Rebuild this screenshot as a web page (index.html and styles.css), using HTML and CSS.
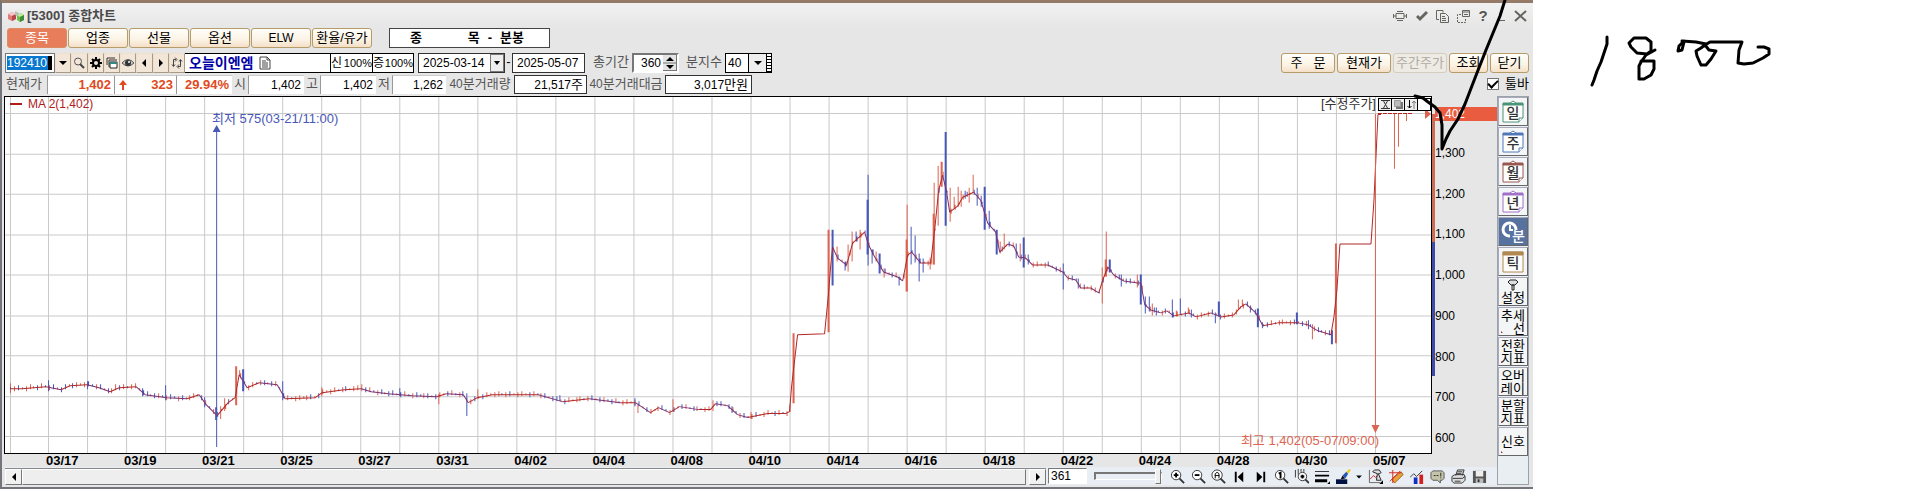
FILE: index.html
```html
<!DOCTYPE html>
<html lang="ko">
<head>
<meta charset="utf-8">
<title>[5300] 종합차트</title>
<link rel="stylesheet" href="styles.css">
</head>
<body>
<main class="desk">
<section class="app">
  <header class="titlebar">
    <svg class="logo" width="18" height="14" viewBox="0 0 18 14"><path d="M1 5l4-2 4 2v5l-4 2-4-2z" fill="#e07b78"/><path d="M1 5l4-2 4 2-4 2z" fill="#f8c9c4"/><path d="M5 7l4-2v5l-4 2z" fill="#b8484c"/><path d="M8 2l3-2 4 2-3 2z" fill="#e8ece4"/><path d="M8 2l4 2v4l-4-2z" fill="#b5bfc0"/><path d="M10 6l4-2 3 2v5l-4 2-3-2z" fill="#6fc04a"/><path d="M10 6l4-2 3 2-4 2z" fill="#c5e9a4"/><path d="M13 8l4-2v5l-4 2z" fill="#3f8d3a"/></svg>
    <h1 class="title">[5300] 종합차트</h1>
    <div class="win-tools">
      <button class="plain" aria-label="고정"><svg width="16" height="14" viewBox="0 0 16 14"><path d="M4 4.500h8v5H4zM4 7H1M15 7h-3M1.500 5v4M14.500 5v4M5 2.500h6M5 11.500h6" class="line"/></svg></button>
      <button class="plain" aria-label="확인"><svg width="12" height="14" viewBox="0 0 12 14"><path d="M1 7l3 3 7-7" class="line thick"/></svg></button>
      <button class="plain" aria-label="복사"><svg width="13" height="14" viewBox="0 0 13 14"><path d="M3 10.500H.5v-9H7v2M4.500 4.500h5l3 3v6h-8zM6 7.500h3M6 9.500h4M6 11.500h4" class="line"/></svg></button>
      <button class="plain" aria-label="분리"><svg width="13" height="14" viewBox="0 0 13 14"><path d="M5.500 1.500h7v6h-7zM5 3h7M7 5.500h4" class="line"/><path d="M4 5.500H.5v8h8V9" class="line" stroke-dasharray="2 1"/></svg></button>
      <button class="plain help" aria-label="도움말">?</button>
      <button class="plain" aria-label="최소화"><svg width="10" height="14" viewBox="0 0 10 14"><path d="M1 11.500h8" class="line"/></svg></button>
      <button class="plain" aria-label="닫기"><svg width="13" height="14" viewBox="0 0 13 14"><path d="M1 2l11 10M12 2L1 12" class="line mid"/></svg></button>
    </div>
  </header>

  <nav class="tabs">
    <button class="tab active">종목</button><button class="tab">업종</button><button class="tab">선물</button><button class="tab">옵션</button><button class="tab latin">ELW</button><button class="tab">환율/유가</button>
    <div class="mode"><span class="grow">종</span><span>목</span><span>-</span><span>분봉</span></div>
  </nav>

  <div class="row query">
    <input class="code" aria-label="종목코드" value="192410">
    <div class="iconset">
      <button class="sq" aria-label="목록"><svg width="12" height="12" viewBox="0 0 12 12"><path d="M2 4h8L6 8z"/></svg></button>
      <button class="sq" aria-label="검색"><svg width="12" height="12" viewBox="0 0 12 12"><circle cx="5" cy="4.500" r="3.500" fill="none" stroke="#555"/><path d="M7 7l4 4" stroke="#444" stroke-width="2"/></svg></button>
      <button class="sq" aria-label="설정"><svg width="12" height="12" viewBox="0 0 12 12"><circle cx="6" cy="6" r="3" fill="none" stroke="#000" stroke-width="2"/><path d="M6 0v3M6 9v3M0 6h3M9 6h3M2 2l2 2M8 8l2 2M10 2L8 4M4 8l-2 2" stroke="#000" stroke-width="2"/></svg></button>
      <button class="sq" aria-label="창"><svg width="12" height="12" viewBox="0 0 12 12"><path d="M1 8V1h8M3 3h8M3 10V3" fill="none" stroke="#333"/><path d="M4 5h7v6H4z" fill="#fff" stroke="#222"/><path d="M4 5h7v2H4z" fill="#388"/></svg></button>
      <button class="sq" aria-label="보기"><svg width="14" height="12" viewBox="0 0 14 12"><path d="M1 6q6-7 12 0q-6 6-12 0z" fill="#ccc" stroke="#555"/><circle cx="7" cy="6" r="3" fill="#333"/><circle cx="8" cy="5" r="1" fill="#fff"/></svg></button>
      <button class="sq" aria-label="이전"><svg width="12" height="12" viewBox="0 0 12 12"><path d="M8 2v8L4 6z"/></svg></button>
      <button class="sq" aria-label="다음"><svg width="12" height="12" viewBox="0 0 12 12"><path d="M4 2v8l4-4z"/></svg></button>
      <button class="sq" aria-label="갱신"><svg width="12" height="12" viewBox="0 0 12 12"><path d="M5 2.500H2.500V9M7 9.500h2.500V3M4 .5l2 2-2 2M8 7.500l-2 2 2 2M1 7.500l1.500 2 1.500-2M8 4.500l1.500-2 1.500 2" fill="none" stroke="#444"/></svg></button>
    </div>
    <div class="name"><b>오늘이엔엠</b><svg width="12" height="14" viewBox="0 0 12 14"><path d="M1 1h7l3 3v9H1zM8 1v3h3M3 5h4M3 7h6M3 9h6M3 11h6" fill="#fff" stroke="#444"/></svg></div>
    <div class="rate"><span>신</span><span class="pct">100%</span></div><div class="rate"><span>증</span><span class="pct">100%</span></div>
    <div class="date from"><input class="n" aria-label="시작일" value="2025-03-14"><button class="drop" aria-label="달력"><svg width="8" height="6" viewBox="0 0 8 6"><path d="M1 1h6L4 5z"/></svg></button></div>
    <span class="dash">-</span>
    <div class="date"><input class="n" aria-label="종료일" value="2025-05-07"></div>
    <label class="lbl period" for="period">총기간</label>
    <div class="spin"><input class="n" id="period" value="360"><svg width="14" height="16" viewBox="0 0 14 16"><path d="M0 0h14v16H0z" fill="#e4e4e4"/><path d="M0 8h14M0 15.500h14M13.500 0v16" stroke="#777"/><path d="M7 2l4 4H3zM7 14l4-4H3z"/></svg></div>
    <label class="lbl minute" for="minute">분지수</label>
    <div class="combo"><select class="n" id="minute"><option>40</option></select><span class="combo-btn"><svg width="10" height="8" viewBox="0 0 10 8"><path d="M1 2h8L5 6z"/></svg></span><i class="grip"></i></div>
    <div class="actions"><button class="act w54">주&nbsp;&nbsp; 문</button><button class="act w54">현재가</button><button class="act w54" disabled>주간주가</button><button class="act w40">조회</button><button class="act w40">닫기</button></div>
  </div>

  <div class="row quote">
    <span class="lbl first">현재가</span>
    <output class="cell c67 up">1,402</output><output class="cell c61 up arrow"><svg width="10" height="12" viewBox="0 0 10 12"><path d="M5 1l4 5H6v5H4V6H1z" fill="#e04a20"/></svg>323</output><output class="cell c55 up">29.94%</output>
    <span class="lbl one">시</span><output class="cell c55">1,402</output>
    <span class="lbl one">고</span><output class="cell c55">1,402</output>
    <span class="lbl one">저</span><output class="cell c55 last">1,262</output>
    <span class="lbl vol"><i class="n">40</i>분거래량</span><output class="cell boxed c73">21,517<span class="k">주</span></output>
    <span class="lbl amt"><i class="n">40</i>분거래대금</span><output class="cell boxed c87">3,017<span class="k">만원</span></output>
    <label class="toggle"><input type="checkbox" checked>툴바</label>
  </div>

  <div class="body">
    <div class="main">
      <div class="plot-row">
        <div class="plot">
          <svg id="chart" class="chart" viewBox="5 97 1425 357" preserveAspectRatio="none"></svg>
          <span class="legend"><i></i>MA 2(1,402)</span>
          <span class="note low">최저 575(03-21/11:00)</span>
          <span class="note high">최고 1,402(05-07/09:00)</span>
          <div class="adjust"><span>[수정주가]</span>
            <button aria-label="축소"><svg width="11" height="11" viewBox="0 0 11 11"><path d="M1 1.500h9M1 9.500h9M3 1l5 9M8 1L3 10" stroke="#333" fill="none"/></svg></button><button aria-label="배경"><svg width="11" height="11" viewBox="0 0 11 11"><path d="M3 3h7v7H3z" fill="#777"/><path d="M1.500 1.500h6v6h-6z" fill="#bbb" stroke="#999"/></svg></button><button aria-label="반전"><svg width="11" height="11" viewBox="0 0 11 11"><path d="M3.500 1v8M1.500 7l2 2 2-2" fill="none" stroke="#000"/><path d="M8 10V2M6 4l2-2 2 2" fill="none" stroke="#777"/></svg></button><button aria-label="빈칸"></button>
          </div>
        </div>
        <div class="range"></div>
        <div class="axis"><span class="now">1,402</span>
          <div class="ticks"><span>1,300</span><span>1,200</span><span>1,100</span><span>1,000</span><span>900</span><span>800</span><span>700</span><span>600</span></div>
        </div>
      </div>
      <div class="days"><span>03/17</span><span>03/19</span><span>03/21</span><span>03/25</span><span>03/27</span><span>03/31</span><span>04/02</span><span>04/04</span><span>04/08</span><span>04/10</span><span>04/14</span><span>04/16</span><span>04/18</span><span>04/22</span><span>04/24</span><span>04/28</span><span>04/30</span><span>05/07</span></div>
      <div class="bottom">
        <div class="scroll"><button aria-label="왼쪽"><svg width="6" height="8" viewBox="0 0 6 8"><path d="M5 0v8L1 4z"/></svg></button><div class="track"></div><button aria-label="오른쪽"><svg width="6" height="8" viewBox="0 0 6 8"><path d="M1 0v8l4-4z"/></svg></button></div>
        <input class="count" aria-label="봉 개수" value="361">
        <input class="slider" type="range" aria-label="확대" value="100">
        <div class="tools">
          <button class="plain" aria-label="확대"><svg viewBox="0 0 16 16"><circle cx="6.500" cy="6.500" r="5" class="lens"/><path d="M10 10l5 5" class="handle"/><path d="M4 6.500h5M6.500 4v5" class="bold"/></svg></button>
          <button class="plain" aria-label="축소"><svg viewBox="0 0 16 16"><circle cx="6.500" cy="6.500" r="5" class="lens"/><path d="M10 10l5 5" class="handle"/><path d="M4 6.500h5" class="bold"/></svg></button>
          <button class="plain" aria-label="전체"><svg viewBox="0 0 16 16"><circle cx="6.500" cy="6.500" r="5.500" class="lens"/><path d="M10 10l5 5" class="handle"/><path d="M4.500 10V5l2-1.500 2 1.500v5M4 7h5" class="bold fine"/></svg></button>
          <button class="plain" aria-label="처음"><svg viewBox="0 0 16 16"><path d="M3 3h2v11H3zM12 3v11L6 8.500z"/></svg></button>
          <button class="plain" aria-label="끝"><svg viewBox="0 0 16 16"><path d="M11 3h2v11h-2zM4 3v11l6-5.500z"/></svg></button>
          <button class="plain" aria-label="원래대로"><svg viewBox="0 0 16 16"><circle cx="6.500" cy="6.500" r="5" class="lens"/><path d="M10 10l5 5" class="handle"/><path d="M5 5l2-1v6" class="bold"/></svg></button>
          <button class="plain" aria-label="구간 확대"><svg viewBox="0 0 16 16"><path d="M1.500 1v8M4.500 0v6M7.500 0v3M10.500 0v3" stroke="#333"/><circle cx="9" cy="8" r="4.500" class="lens"/><path d="M12 11l4 4" class="handle"/><path d="M7 8h4M9 6v4" class="bold"/></svg></button>
          <button class="plain" aria-label="선 굵기"><svg viewBox="0 0 16 16"><path d="M0 2h15v1H0zM0 6h15v2H0zM0 11h13v3H0zM13 16h3v-3z"/></svg></button>
          <button class="plain" aria-label="선 색"><svg viewBox="0 0 16 16"><path d="M0 11h12v5H0z" fill="#001040"/><path d="M5 11l2-4 3 3z" fill="#111"/><path d="M7 7l4-4 2 2-3 5z" fill="#2458b8"/><path d="M11 3l3-3 2 1-3 4z" fill="#e8cf20"/></svg></button>
          <button class="plain tiny" aria-label="색 목록"><svg viewBox="0 0 6 16"><path d="M0 7h6L3 10z"/></svg></button>
          <button class="plain" aria-label="차트 도구"><svg viewBox="0 0 16 16"><path d="M1.500 1v13.500H13" class="line"/><path d="M2 11l4-4 2 2 4-4" stroke="#d02020" fill="none"/><path d="M5 3l2-2h5l2 3-2 1h-1l3 7H9l1-7z" fill="#ddd" stroke="#222"/><path d="M12 16h4v-4z"/></svg></button>
          <button class="plain" aria-label="작도"><svg viewBox="0 0 16 16"><path d="M3 11L13 3l2 3L6 15z" fill="#e8a23c" stroke="#a0601c"/><path d="M0 4h13M4 1v14M1 13L12 2" stroke="#d8281c" fill="none"/></svg></button>
          <button class="plain" aria-label="지표"><svg viewBox="0 0 16 16"><path d="M4 9h4v7H4z" fill="#1030c0"/><path d="M10 6h4v10h-4z" fill="#d02020"/><path d="M0 9l4-4 3 3 6-6" stroke="#333" fill="none"/></svg></button>
          <button class="plain" aria-label="메모"><svg viewBox="0 0 16 16"><path d="M3 2h10l2 2v6l-2 2h-2v3l-3-3H3l-2-2V4z" fill="#c5c4aa" stroke="#555"/><path d="M4 7h2M7 7h2M11.500 4v4M11.500 9v1" stroke="#222"/></svg></button>
          <button class="plain" aria-label="인쇄"><svg viewBox="0 0 16 16"><path d="M5 7l2-6h7l-2 6M1 8l3-2h10l1 2v4l-3 3H3l-2-2z" fill="#ddd" stroke="#333"/><path d="M2 10h10l3-2M7 3h5M6 5h5M4 13h6" stroke="#333" fill="none"/></svg></button>
          <button class="plain" aria-label="저장"><svg viewBox="0 0 16 16"><path d="M1 2h14v13H1z" fill="#555"/><path d="M4 2h8v6H4z" fill="#eee"/><path d="M4 10h8v5H4z" fill="#bbb"/><path d="M6 11h2v3H6z" fill="#333"/></svg></button>
        </div>
      </div>
    </div>
    <aside class="side">
      <button class="cal" aria-label="일봉"><svg viewBox="0 0 24 24" class="green"><path d="M2 4h20v14l-4 4H2z"/><path d="M2 3h20v2H2z" class="top"/><path d="M9 3l3-2 3 2M18 22v-4h4"/></svg><b>일</b></button>
      <button class="cal" aria-label="주봉"><svg viewBox="0 0 24 24" class="blue"><path d="M2 4h20v14l-4 4H2z"/><path d="M2 3h20v2H2z" class="top"/><path d="M9 3l3-2 3 2M18 22v-4h4"/></svg><b>주</b></button>
      <button class="cal" aria-label="월봉"><svg viewBox="0 0 24 24" class="brown"><path d="M2 4h20v14l-4 4H2z"/><path d="M2 3h20v2H2z" class="top"/><path d="M9 3l3-2 3 2M18 22v-4h4"/></svg><b>월</b></button>
      <button class="cal" aria-label="년봉"><svg viewBox="0 0 24 24" class="violet"><path d="M2 4h20v14l-4 4H2z"/><path d="M2 3h20v2H2z" class="top"/><path d="M9 3l3-2 3 2M18 22v-4h4"/></svg><b>년</b></button>
      <button class="cal on" aria-label="분봉"><svg viewBox="0 0 24 24"><path d="M9 16A6.500 6.500 0 1 1 15 10" stroke-width="3"/><path d="M9 5v5h3" stroke-width="2"/></svg><b>분</b></button>
      <button class="cal" aria-label="틱"><svg viewBox="0 0 24 24" class="amber"><path d="M2 2h20v20H2z"/><path d="M2 2h20v3H2z" class="top"/></svg><b>틱</b></button>
      <button class="txt"><svg width="12" height="12" viewBox="0 0 12 12"><path d="M1 3l2-2h6l2 2-3 3H4zM5 6h2v5H5z" fill="#ddd" stroke="#222"/></svg><span>설정</span></button>
      <button class="txt more"><span>추세</span><span class="end">선</span></button>
      <button class="txt more"><span>전환</span><span>지표</span></button>
      <button class="txt more"><span>오버</span><span>레이</span></button>
      <button class="txt more"><span>분할</span><span>지표</span></button>
      <button class="txt more"><span>신호</span></button>
    </aside>
  </div>
</section>
<section class="blank"></section>
<svg class="ink" viewBox="0 0 1912 489" preserveAspectRatio="none">
  <path d="M1505 0L1500 16L1486 50L1475 78L1465 104L1458 119L1450 131L1446 139L1442 149L1442 125L1440 113L1435 107L1428 102L1423 98L1415 96"/>
  <path d="M1607 37v7l-6 18-4 9-3 9-2 5"/>
  <path d="M1646 38h-12l-5 5 2 4 6 6 10 1 4-3v-9l-5-4M1655 50l-9 5-5 7-2 4v13h5l7-4 3-6v-8h-13"/>
  <path d="M1684 41l-5 5-1 5 4-1 2-8M1682 41l14 1 10 2-5 4-5 3 1 5 4 9h5l5-6 5-8-7-1-4-5 5-3h32l-3 8-1 13 6 1 9-1 10-5 6-4v-5l-5-2h-6"/>
</svg>
</main>
<script src="chart.js"></script>
</body>
</html>
```
FILE: styles.css
```css
* { box-sizing: border-box; }
body { margin: 0; background: #fff; color: #000; font: 12px/14px "Liberation Sans", "Noto Sans CJK KR", sans-serif; }
button, input, select { font: inherit; color: inherit; margin: 0; padding: 0; border: 0; border-radius: 0; }
button { display: flex; align-items: center; justify-content: center; background: none; }
svg { display: block; flex: none; }
i { font-style: normal; }
.n { font-size: 12px; }
.k { font-size: 13px; }
.desk { position: relative; display: grid; grid-template-columns: minmax(0, 1533fr) minmax(0, 379fr); min-height: 100vh; }
.app { min-width: 0; display: flex; flex-direction: column; background: linear-gradient(#f1f1f1, #e6e6e6 26px); border: solid #74757a; border-width: 3px 0 2px 2px; border-top-color: #967a68; padding: 0 4px 2px 3px; }
.ink { position: absolute; inset: 0; width: 100%; height: 100%; fill: none; stroke: #000; stroke-width: 3; stroke-linejoin: round; stroke-linecap: round; pointer-events: none; }

.titlebar { display: flex; align-items: center; height: 25px; padding: 0 2px; gap: 2px; }
.title { flex: 1; margin: 0; font-size: 13px; font-weight: 700; color: #4a4a4a; line-height: 18px; }
.win-tools { display: flex; align-items: center; gap: 8px; color: #55534f; }
.line { fill: none; stroke: #66645f; }
.thick { stroke-width: 3; }
.mid { stroke-width: 2; }
.help { font-size: 15px; font-weight: 700; width: 10px; }

.tabs { display: flex; gap: 1px; height: 20px; padding-left: 2px; font-size: 13px; }
.tab, .act { border: 1px solid #b59c68; border-radius: 3px; background: linear-gradient(#fffefa, #fbf3e4 60%, #f5dfc8); white-space: nowrap; font-size: 13px; }
.tab { width: 60px; }
.tab.latin { font-size: 12px; }
.tab.active { background: #e87d5c; border-color: #dd8d60; color: #fff; }
.mode { width: 161px; margin-left: 16px; padding: 0 25px 0 20px; display: flex; gap: 8px; align-items: center; border: 1px solid #444; background: #fff; font-weight: 700; }
.grow { flex: 1; }

.row { display: flex; align-items: center; font-size: 13px; white-space: nowrap; }
.query { height: 20px; margin-top: 5px; align-items: stretch; }
.code { width: 50px; padding-left: 1px; font-size: 12px; border: 1px solid #777; color: #fff; background: linear-gradient(#0878d0, #0878d0) 1px 2px / 41px 14px no-repeat, linear-gradient(#000, #000) 42px 2px / 4px 14px no-repeat, #fff; }
.iconset { display: grid; grid-template-columns: repeat(8, 1fr); width: 130px; }
.sq { border: 1px solid; border-color: #eee0cc #a99a86 #a99a86 #eee0cc; background: #f2e6d8; }
.name { width: 145px; padding-left: 4px; display: flex; align-items: center; gap: 6px; background: #fff; border: solid #000; border-width: 1px 0; color: #0000a8; font-size: 14px; }
.rate { width: 42px; display: flex; justify-content: space-between; font-size: 12px; background: #fff; border: 1px solid #000; border-right: 0; line-height: 18px; }
.rate + .rate { border-right: 1px solid #000; }
.pct { font-size: 11px; }
.date { width: 73px; display: flex; border: 1px solid #333; background: #fff; }
.date.from { width: 87px; margin-left: 4px; }
.date input { flex: 1; min-width: 0; padding-left: 4px; background: none; }
.drop { width: 14px; border: 1px solid #777; background: #eee; }
.dash { width: 7px; text-align: center; line-height: 18px; }
.lbl { color: #555; line-height: 18px; }
.period { margin: 0 3px 0 8px; width: 36px; }
.spin { width: 47px; display: flex; align-items: center; border: 2px solid; border-color: #777 #fff #fff #777; background: #fff; }
.spin input { flex: 1; min-width: 0; text-align: right; padding-right: 2px; background: none; }
.minute { margin: 0 3px 0 7px; width: 36px; }
.combo { width: 47px; display: flex; border: 1px solid #000; background: #fff; }
.combo select { appearance: none; flex: 1; min-width: 0; padding-left: 2px; background: #fff; }
.combo-btn { width: 18px; display: grid; place-items: center; background: #eee; border-left: 1px solid #000; }
.grip { width: 5px; border-left: 1px solid #000; background: repeating-linear-gradient(#fff 0 2px, #000 2px 3px); }
.actions { margin-left: auto; display: flex; gap: 2px; }
.w54 { width: 54px; } .w40 { width: 39px; }
.act:disabled { color: #b0aca4; border-color: #d4cdbd; background: #eeeae4; }

.quote { height: 20px; margin-top: 1px; margin-bottom: 2px; }
.quote .first { width: 42px; padding-left: 1px; }
.cell { height: 19px; padding: 0 3px; text-align: right; line-height: 18px; font-size: 12px; background: #fff; border-left: 1px solid #999; border-top: 1px solid #ccc; }
.cell.up { color: #e04a20; font-weight: 700; font-size: 13px; }
.cell.arrow { display: flex; align-items: center; justify-content: space-between; }
.boxed { border: 1px solid #333; }
.c55 { width: 56px; } .c61 { width: 62px; } .c67 { width: 67px; } .c73 { width: 73px; } .c87 { width: 87px; }
.last { width: 54px; }
.one { width: 16px; text-align: center; }
.vol { width: 68px; text-align: center; } .amt { width: 78px; text-align: center; }
.toggle { margin-left: auto; display: flex; align-items: center; gap: 6px; }
.toggle input { appearance: none; width: 12px; height: 12px; border: 1px solid #777; background: #fff; display: grid; place-items: center; }
.toggle input::after { content: ""; width: 8px; height: 4px; border: solid #000; border-width: 0 0 2px 2px; rotate: -45deg; translate: 0 -1px; }

.body { flex: 1; display: flex; min-height: 389px; }
.main { flex: 1; min-width: 0; display: flex; flex-direction: column; }
.plot-row { flex: 1; display: flex; min-height: 0; }
.plot { position: relative; flex: 1; min-width: 0; border: solid #000; border-width: 1px 1px 1px 0; box-shadow: -1px 0 #000; background: #fff; }
.chart { position: absolute; inset: 0; width: 100%; height: 100%; }
.grid { stroke: #c9c9c9; fill: none; }
.up-bar { stroke: #dc6450; fill: none; }
.down-bar { stroke: #4858b8; fill: none; }
.wide { stroke-width: 2; }
.ma { stroke: #b02828; fill: none; }
.ma-cool { stroke: #7c3070; fill: none; }
.red { fill: #dc6450; } .navy { fill: #4858b8; }
.legend { position: absolute; left: 5px; top: 0; display: flex; align-items: center; gap: 6px; color: #b01c1c; }
.legend i { width: 12px; height: 2px; background: #b01c1c; }
.note { position: absolute; white-space: nowrap; font-size: 13px; }
.low { left: 207px; top: 15px; color: #4858b8; }
.high { right: 52px; bottom: 5px; color: #dc6450; }
.adjust { position: absolute; right: 0; top: 0; display: flex; align-items: center; color: #333; font-size: 13px; line-height: 14px; }
.adjust button { width: 14px; height: 13px; border: 1px solid #000; background: #eee; margin-left: -1px; }
.adjust button:last-child { background: #fff; }
.adjust span { margin-right: 3px; }
.range { width: 3px; margin: 18px 0 78px; background: linear-gradient(#cc6a58 49%, #3c4ca8 49%); }
.axis { width: 62px; display: flex; flex-direction: column; }
.now { height: 14px; margin-top: 11px; background: #ea5c40; color: #fff; }
.ticks { flex: 1; margin: 25px 0 9px; display: flex; flex-direction: column; justify-content: space-between; }
.days { display: grid; grid-template-columns: repeat(18, 1fr); height: 13px; line-height: 13px; padding: 0 46px 0 41px; font-size: 13px; font-weight: 700; }
.bottom { display: flex; align-items: center; height: 18px; background: #e9eef5; }
.scroll { flex: 1; display: flex; height: 17px; border-top: 1px solid #888; background: #eee; }
.scroll button { width: 17px; border: 1px solid; border-color: #fff #777 #777 #fff; background: #f1f1f1; }
.track { flex: 1; margin-right: 3px; border: 1px solid; border-color: #fff #777 #777 #fff; }
.count { width: 39px; height: 16px; margin-left: 2px; padding-left: 2px; border: 1px solid; border-color: #777 #fff #fff #777; background: #fff; }
.slider { appearance: none; width: 68px; height: 16px; margin: 0 8px 0 7px; background: none; }
.slider::-webkit-slider-runnable-track { height: 8px; border: 1px solid; border-width: 2px 1px 1px 2px; border-color: #777 #fff #fff #777; }
.slider::-webkit-slider-thumb { appearance: none; width: 6px; height: 15px; margin-top: -5px; border: 1px solid; border-color: #fff #777 #777 #fff; background: #eee; }
.tools { width: 327px; display: flex; justify-content: space-between; align-items: center; padding-right: 10px; }
.tools svg { width: 15px; height: 15px; }
.tools .tiny svg { width: 6px; }
.lens { fill: #fff; stroke: #333; }
.handle { stroke: #333; stroke-width: 2; }
.bold { fill: none; stroke: #000; stroke-width: 2; }
.fine { stroke-width: 1; }
.side { width: 32px; border: 1px solid #9aa2ac; background: #e9eef2; display: flex; flex-direction: column; gap: 1px; }
.side button { height: 29px; border: 1px solid; border-color: #aab #666 #666 #aab; background: #f4f5f6; }
.side .cal { display: grid; grid-template: 100% / 100%; place-items: center; }
.cal svg { grid-area: 1 / 1; width: 24px; height: 24px; fill: #fff; stroke: currentColor; }
.cal b { grid-area: 1 / 1; padding-top: 3px; font-size: 14px; line-height: 16px; color: #333; font-weight: 500; }
.cal .top { fill: currentColor; }
.green { color: #4a9478; } .blue { color: #5078b8; } .brown { color: #985850; } .violet { color: #a070c8; } .amber { color: #b08850; }
.side .on { background: #5872a0; color: #fff; }
.cal.on svg { fill: none; }
.on b { color: #fff; padding: 8px 0 0 11px; }
.side .txt { position: relative; flex-direction: column; font-size: 13px; line-height: 13px; }
.end { padding-left: 12px; }
.more::before { content: ""; position: absolute; left: 2px; bottom: 2px; border: 1px solid; border-color: transparent transparent #a03030 #a03030; }
```
FILE: chart.js
```js
// Moving-average vertices: x, y in plot units.
const line = [
  10,389, 22,389, 46,387, 61,390, 70,386, 87,385, 99,388, 110,392, 119,388, 136,387, 145,395, 167,398, 187,399,
  199,395, 206,405, 217,416, 228,403, 235,398, 239,375, 247,388, 259,383, 277,385, 285,399, 315,398, 322,393,
  344,390, 361,389, 371,392, 388,394, 412,396, 436,397, 446,394, 463,395, 468,403, 477,398, 492,395, 538,395,
  562,402, 589,399, 620,403, 635,403, 650,413, 658,408, 669,413, 679,407, 698,410, 710,410, 715,404, 727,406,
  737,415, 747,418, 767,414, 785,414, 789,412, 791,387, 797,335, 824,334, 828,293, 830,267, 832,247, 837,258,
  846,265, 852,243, 864,232, 868,245, 873,255, 883,272, 897,277, 902,281, 907,255, 911,252, 920,263, 930,263,
  934,230, 938,190, 942,175, 946,192, 949,212, 957,206, 962,197, 973,192, 980,200, 987,223, 995,232, 999,252,
  1007,244, 1013,246, 1018,257, 1025,258, 1032,265, 1047,265, 1062,272, 1067,278, 1075,280, 1080,288, 1090,288,
  1098,293, 1102,280, 1107,267, 1113,275, 1123,281, 1137,283, 1140,283, 1144,305, 1150,310, 1160,313, 1166,311,
  1173,316, 1188,313, 1195,317, 1210,313, 1220,317, 1233,315, 1240,307, 1245,304, 1255,313, 1262,326, 1277,323,
  1297,323, 1307,325, 1317,331, 1330,335, 1333,317, 1336,290, 1339,244, 1370,244, 1373,200, 1377,114, 1380,114
];
// Tall bars: x, high, low.
const up = [
  10,384,394, 115,385,391, 220,407,420, 224,399,412, 239,371,377, 321,388,397, 361,385,392, 438,395,405,
  477,390,400, 637,405,414, 672,400,413, 712,401,412, 750,413,420, 789,405,413, 836,247,262, 847,245,272,
  851,232,262, 859,230,250, 875,252,262, 883,269,278, 906,205,292, 929,258,270, 933,183,265, 937,166,226,
  949,188,222, 953,197,209, 957,187,207, 960,191,207, 968,188,203, 972,175,193, 999,242,254, 1003,234,250,
  1019,244,262, 1101,268,304, 1105,232,277, 1136,275,288, 1151,304,316, 1175,311,317, 1187,308,314,
  1237,300,310, 1241,300,307, 1311,325,340, 1393,114,169, 1397,114,147, 1405,114,121
];
const upWide = [236,367,406, 793,334,404, 828,230,333, 906,240,292, 933,214,265, 941,162,187, 1105,260,277, 1335,244,344];
const down = [
  48,381,392, 87,382,390, 142,389,397, 165,386,401, 204,398,408, 282,382,401, 399,389,397, 466,394,417,
  559,396,402, 634,399,407, 731,407,414, 844,262,271, 855,232,242, 867,175,266, 871,250,264, 898,277,286,
  910,227,265, 914,236,263, 918,254,282, 922,259,273, 964,191,199, 976,188,206, 980,196,207, 988,211,229,
  1015,244,259, 1027,255,265, 1062,264,290, 1077,279,289, 1120,275,287, 1144,297,314, 1148,297,312,
  1155,308,316, 1171,300,318, 1179,299,315, 1190,310,318, 1214,313,324, 1249,306,313, 1261,323,329, 1307,321,330
];
const downWide = [
  216,408,421, 243,370,392, 832,230,286, 867,200,255, 879,254,274, 945,132,226, 984,187,230, 996,230,255,
  1023,238,268, 1109,260,273, 1140,275,305, 1218,302,317, 1257,309,328, 1296,313,325, 1331,331,345
];

const svg = document.getElementById("chart");
function add(tag, attrs) {
  const el = document.createElementNS("http://www.w3.org/2000/svg", tag);
  for (const key in attrs) el.setAttribute(key, attrs[key]);
  svg.appendChild(el);
}
function bars(list, shift) {
  let d = "";
  for (let i = 0; i < list.length; i += 3) d += `M${list[i] + shift} ${list[i + 1]}V${list[i + 2]}`;
  return d;
}
function level(x) {
  let i = 0;
  while (i < line.length - 4 && line[i + 2] < x) i += 2;
  const t = (x - line[i]) / (line[i + 2] - line[i]);
  return [line[i + 1] + t * (line[i + 3] - line[i + 1]), line[i + 3] - line[i + 1]];
}

let grid = "M10.5 97V454";
for (let x = 48.5; x < 1400; x += 39) grid += `M${x} 97V454`;
for (let k = 0; k < 9; k++) grid += `M5 ${Math.round(113 + k * 40.5) + 0.5}H1430`;
add("path", { class: "grid", d: grid });

// Small bars that fill the spaces between the tall ones.
const smallUp = [], smallDown = [];
for (let n = 0; n < 340; n++) {
  const x = Math.round(10 + n * 3.9);
  if (x > 1330 || (x > 788 && x < 835)) continue;
  const [y, slope] = level(x);
  const high = Math.round(y - 1 - (n * 7 % 3));
  const low = Math.round(y + 1 + (n * 5 % 3));
  (n * 11 % 7 < (slope > 0 ? 4 : 2) ? smallDown : smallUp).push(x, high, low);
}
add("path", { class: "up-bar", d: bars(smallUp, 0.5) + bars(up, 0.5) });
add("path", { class: "down-bar", d: bars(smallDown, 0.5) + bars(down, 0.5) });
add("path", { class: "up-bar wide", d: bars(upWide, 0) });
add("path", { class: "down-bar wide", d: bars(downWide, 0) });

let warm = "", cool = "";
for (let i = 0; i < line.length - 2; i += 2) {
  const seg = `M${line[i]} ${line[i + 1] + 0.5}L${line[i + 2]} ${line[i + 3] + 0.5}`;
  if (line[i + 3] > line[i + 1]) cool += seg; else warm += seg;
}
add("path", { class: "ma", d: warm });
add("path", { class: "ma-cool", d: cool });
add("path", { class: "ma", d: "M1377 113.5H1411", "stroke-dasharray": "4 1" });

add("path", { class: "down-bar", d: "M216.500 128V448" });
add("path", { class: "navy", d: "M216.500 125l4 7h-8z" });
add("path", { class: "up-bar", d: "M1374.500 114V428" });
add("path", { class: "red", d: "M1374.500 434l4-8h-8zM1424 109v10l6-5z" });
```
